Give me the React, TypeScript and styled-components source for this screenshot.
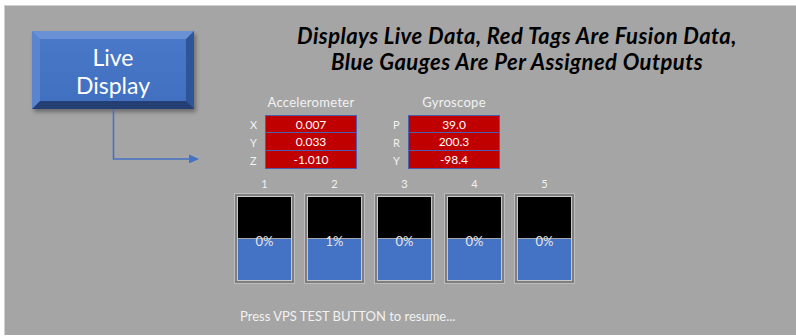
import styled, { createGlobalStyle } from "styled-components";

const GlobalStyle = createGlobalStyle`
  html, body {
    margin: 0;
    padding: 0;
    background: #ffffff;
    font-family: Lato, "Open Sans", sans-serif;
  }
`;

const Canvas = styled.div`
  display: flex;
  flex-direction: row;
  margin: 5px 0 0 4px;
  height: 330px;
  background: #a5a5a5;
  border-top: 1px solid #cfcfcf;
  border-left: 1px solid #cfcfcf;
  box-sizing: border-box;
  overflow: hidden;
`;

const LeftColumn = styled.div`
  display: flex;
  flex-direction: column;
  width: 195px;
  flex-shrink: 0;
  padding: 25px 0 0 27px;
  box-sizing: border-box;
`;

const LiveButton = styled.div`
  width: 162px;
  height: 78px;
  box-sizing: border-box;
  border-style: solid;
  border-width: 8px;
  border-top-color: #6a90d6;
  border-left-color: #5b84cf;
  border-right-color: #2f5597;
  border-bottom-color: #243f74;
  background: linear-gradient(#4a78c9, #4270c0);
  box-shadow: 2px 3px 4px rgba(0, 0, 0, 0.35);
  display: flex;
  align-items: center;
  justify-content: center;
  text-align: center;
  color: #ffffff;
  font-size: 23px;
  line-height: 28px;
  padding-top: 2px;
`;

const Arrow = styled.svg`
  display: block;
  margin-left: 80px;
`;

const RightColumn = styled.div`
  display: flex;
  flex-direction: column;
  padding: 17px 0 0 34px;
`;

const Title = styled.div`
  width: 566px;
  text-align: center;
  font-size: 22px;
  letter-spacing: 0.45px;
  line-height: 26px;
  font-weight: bold;
  font-style: italic;
  color: #000000;
`;

const SensorRow = styled.div`
  display: flex;
  flex-direction: row;
  gap: 36px;
  margin: 19px 0 0 16px;
`;

const SensorBlock = styled.div`
  display: flex;
  flex-direction: column;
`;

const SensorLabel = styled.div`
  padding-left: 15px;
  width: 107px;
  box-sizing: border-box;
  text-align: center;
  font-size: 13px;
  letter-spacing: 0.3px;
  line-height: 16px;
  color: #f2f2f2;
  margin-bottom: 5px;
`;

const DataRow = styled.div`
  display: flex;
  flex-direction: row;
  align-items: center;
`;

const AxisLetter = styled.div`
  width: 15px;
  font-size: 11px;
  color: #f2f2f2;
`;

const DataCell = styled.div<{ $first: boolean }>`
  width: 92px;
  height: 18px;
  box-sizing: border-box;
  background: #c00000;
  border: 1px solid #4a5fb0;
  border-top-width: ${(p) => (p.$first ? "1px" : "0")};
  color: #ffffff;
  font-size: 12px;
  line-height: 17px;
  text-align: center;
`;

const GaugeRow = styled.div`
  display: flex;
  flex-direction: row;
  gap: 9px;
  margin-top: 8px;
`;

const GaugeColumn = styled.div`
  display: flex;
  flex-direction: column;
  align-items: center;
`;

const GaugeNumber = styled.div`
  font-size: 11px;
  line-height: 14px;
  color: #f2f2f2;
  margin-bottom: 2px;
`;

const GaugeFrame = styled.div`
  width: 61px;
  height: 91px;
  box-sizing: border-box;
  border: 1px solid #bdbdbd;
  background: #7f7f7f;
  padding: 2px;
`;

const GaugeInner = styled.div`
  display: flex;
  flex-direction: column;
  height: 100%;
  box-sizing: border-box;
  border: 1px solid #c9c9c9;
`;

const GaugeEmpty = styled.div`
  height: 41px;
  background: #000000;
`;

const GaugeFill = styled.div`
  flex: 1;
  background: #4472c4;
  border-top: 1px solid #a6a6a6;
  text-align: center;
`;

const GaugePercent = styled.div`
  margin-top: -5px;
  font-size: 13px;
  line-height: 14px;
  color: #e6e6e6;
`;

const Footer = styled.div`
  margin: 24px 0 0 6px;
  font-size: 13px;
  line-height: 16px;
  color: #f2f2f2;
`;

const accel = [
  ["X", "0.007"],
  ["Y", "0.033"],
  ["Z", "-1.010"],
];

const gyro = [
  ["P", "39.0"],
  ["R", "200.3"],
  ["Y", "-98.4"],
];

const gauges = ["0%", "1%", "0%", "0%", "0%"];

const Sensor = ({ label, rows }: { label: string; rows: string[][] }) => (
  <SensorBlock>
    <SensorLabel>{label}</SensorLabel>
    {rows.map(([axis, value], i) => (
      <DataRow key={axis + i}>
        <AxisLetter>{axis}</AxisLetter>
        <DataCell $first={i === 0}>{value}</DataCell>
      </DataRow>
    ))}
  </SensorBlock>
);

const App = () => {
  return (
    <>
      <GlobalStyle />
      <Canvas>
        <LeftColumn>
          <LiveButton>
            Live
            <br />
            Display
          </LiveButton>
          <Arrow width="88" height="54" viewBox="0 0 88 54">
            <path d="M1.5 0 V50 H78" fill="none" stroke="#4472c4" strokeWidth="1.6" />
            <polygon points="77,45.5 87,50 77,54.5" fill="#4472c4" />
          </Arrow>
        </LeftColumn>
        <RightColumn>
          <Title>
            Displays Live Data, Red Tags Are Fusion Data,
            <br />
            Blue Gauges Are Per Assigned Outputs
          </Title>
          <SensorRow>
            <Sensor label="Accelerometer" rows={accel} />
            <Sensor label="Gyroscope" rows={gyro} />
          </SensorRow>
          <GaugeRow>
            {gauges.map((g, i) => (
              <GaugeColumn key={i}>
                <GaugeNumber>{i + 1}</GaugeNumber>
                <GaugeFrame>
                  <GaugeInner>
                    <GaugeEmpty />
                    <GaugeFill>
                      <GaugePercent>{g}</GaugePercent>
                    </GaugeFill>
                  </GaugeInner>
                </GaugeFrame>
              </GaugeColumn>
            ))}
          </GaugeRow>
          <Footer>Press VPS TEST BUTTON to resume...</Footer>
        </RightColumn>
      </Canvas>
    </>
  );
};

export default App;
